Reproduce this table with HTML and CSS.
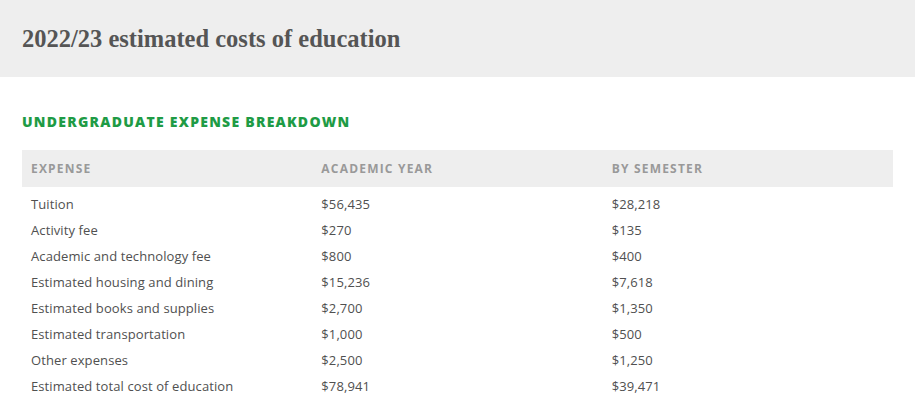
FILE: index.html
```html
<!DOCTYPE html>
<html>
<head>
<meta charset="utf-8">
<link rel="stylesheet" href="styles.css">
</head>
<body>
<header class="banner">
  <h1 class="title">2022/23 estimated costs of education</h1>
</header>
<section class="content">
  <h2 class="subtitle">UNDERGRADUATE EXPENSE BREAKDOWN</h2>
  <table class="costs">
    <thead>
      <tr><th>EXPENSE</th><th>ACADEMIC YEAR</th><th>BY SEMESTER</th></tr>
    </thead>
    <tbody>
      <tr><td>Tuition</td><td>$56,435</td><td>$28,218</td></tr>
      <tr><td>Activity fee</td><td>$270</td><td>$135</td></tr>
      <tr><td>Academic and technology fee</td><td>$800</td><td>$400</td></tr>
      <tr><td>Estimated housing and dining</td><td>$15,236</td><td>$7,618</td></tr>
      <tr><td>Estimated books and supplies</td><td>$2,700</td><td>$1,350</td></tr>
      <tr><td>Estimated transportation</td><td>$1,000</td><td>$500</td></tr>
      <tr><td>Other expenses</td><td>$2,500</td><td>$1,250</td></tr>
      <tr><td>Estimated total cost of education</td><td>$78,941</td><td>$39,471</td></tr>
    </tbody>
  </table>
</section>
</body>
</html>
```
FILE: styles.css
```css
html, body { margin: 0; padding: 0; background: #fff; }
body { font-family: "Open Sans", "Liberation Sans", sans-serif; }
.banner {
  background: #eeeeee;
  height: 77px;
  display: flex;
  align-items: center;
  padding: 0 22px;
}
.title {
  margin: 0;
  font-family: "Liberation Serif", serif;
  font-weight: bold;
  font-size: 24.5px;
  color: #555555;
  position: relative;
  top: 0;
}
.content { padding: 0 22px; }
.subtitle {
  margin: 35px 0 19px;
  font-size: 14px;
  line-height: 19px;
  font-weight: 800;
  letter-spacing: 1.25px;
  color: #1e9b45;
}
.costs {
  width: 871px;
  border-collapse: collapse;
  table-layout: fixed;
}
.costs th {
  background: #eeeeee;
  height: 37px;
  padding: 0 9px;
  text-align: left;
  font-size: 12px;
  font-weight: bold;
  letter-spacing: 1.2px;
  color: #999999;
}
.costs td {
  height: 26px;
  padding: 0 9px;
  font-size: 13px;
  letter-spacing: 0.1px;
  color: #505050;
}
.costs tbody tr:first-child td { padding-top: 4px; }
```
